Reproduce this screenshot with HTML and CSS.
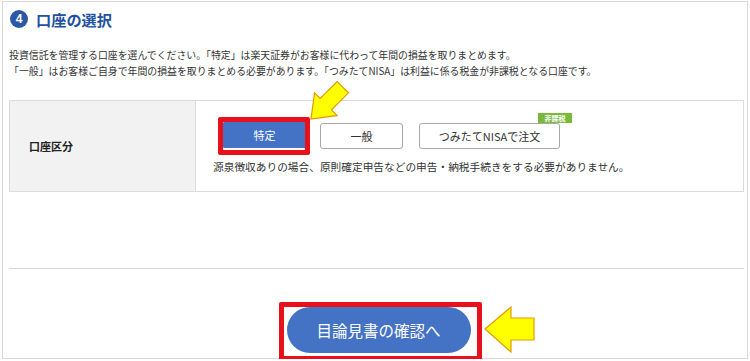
FILE: index.html
```html
<!DOCTYPE html>
<html lang="ja">
<head>
<meta charset="utf-8">
<link rel="stylesheet" href="styles.css">
</head>
<body>
<div class="frame">
  <div class="section">
    <h2 class="heading"><span class="num">4</span><span class="title">口座の選択</span></h2>
    <p class="desc">投資信託を管理する口座を選んでください。「特定」は楽天証券がお客様に代わって年間の損益を取りまとめます。<br>「一般」はお客様ご自身で年間の損益を取りまとめる必要があります。「つみたてNISA」は利益に係る税金が非課税となる口座です。</p>
    <div class="table">
      <div class="th">口座区分</div>
      <div class="td">
        <div class="btns">
          <div class="btn active">特定
            <svg class="arrow-diag" width="44" height="44" viewBox="0 0 44 44"><g transform="translate(2,42) rotate(-45)"><polygon points="0,0 21,-16 21,-8 45,-8 45,8 21,8 21,16" fill="#ffff00" stroke="#e39a0a" stroke-width="1.2" stroke-linejoin="miter"/></g></svg>
          </div>
          <div class="btn">一般</div>
          <div class="btn wide">つみたてNISAで注文<span class="badge">非課税</span></div>
        </div>
        <p class="note">源泉徴収ありの場合、原則確定申告などの申告・納税手続きをする必要がありません。</p>
      </div>
    </div>
  </div>
  <div class="footer">
    <div class="next">目論見書の確認へ
      <svg class="arrow-left" width="52" height="48" viewBox="0 0 52 48"><polygon points="1,23 27,1 27,12 50,12 50,34 27,34 27,46" fill="#ffff00" stroke="#e39a0a" stroke-width="1.2"/></svg>
    </div>
  </div>
</div>
</body>
</html>
```
FILE: styles.css
```css
html, body {
  margin: 0;
  padding: 0;
  background: #fff;
}
body {
  font-family: "Noto Sans CJK JP", "Noto Sans", sans-serif;
  color: #333;
}
.frame {
  box-sizing: border-box;
  width: 746px;
  height: 358px;
  margin: 1px 0 0 2px;
  border: 1px solid #dadada;
  overflow: visible;
}
.section {
  padding: 8px 3px 0 6px;
}
.heading {
  display: flex;
  align-items: center;
  gap: 8px;
  margin: 0;
  padding-left: 1px;
  height: 18px;
}
.num {
  width: 18px;
  height: 18px;
  border-radius: 50%;
  background: #2b58a4;
  color: #fff;
  font-family: "Liberation Sans", sans-serif;
  font-weight: bold;
  font-size: 12px;
  line-height: 18px;
  text-align: center;
}
.title {
  font-size: 15.2px;
  font-weight: bold;
  color: #22519f;
  line-height: 18px;
}
.desc {
  margin: 19px 0 0;
  font-size: 9.9px;
  line-height: 16px;
  color: #333;
  white-space: nowrap;
}
.table {
  display: flex;
  margin-top: 21px;
  height: 92px;
  box-sizing: border-box;
  border: 1px solid #dcdcdc;
}
.th {
  width: 186px;
  flex: none;
  box-sizing: border-box;
  background: #f2f2f2;
  border-right: 1px solid #dcdcdc;
  display: flex;
  align-items: center;
  padding-left: 19px;
  font-size: 11px;
  font-weight: bold;
  color: #222;
}
.td {
  flex: 1;
  padding: 22px 0 0 17px;
}
.btns {
  display: flex;
  align-items: flex-start;
  padding-left: 10px;
  gap: 14px;
}
.btn {
  position: relative;
  box-sizing: border-box;
  width: 83px;
  height: 26px;
  border: 1px solid #a8a8a8;
  border-radius: 3px;
  background: #fff;
  font-size: 11px;
  line-height: 24px;
  text-align: center;
  color: #333;
}
.btn.wide {
  width: 141px;
  margin-left: 2px;
}
.btn.active {
  background: #4472c4;
  border-color: #4472c4;
  color: #fff;
  border-radius: 1px;
  margin-top: -1px;
}
.btn.active::after {
  content: "";
  position: absolute;
  left: -6px;
  right: -5px;
  top: -6px;
  bottom: -8px;
  border: 5px solid #e8101a;
  border-radius: 2px;
}
.arrow-diag {
  position: absolute;
  left: 85px;
  top: -46px;
  overflow: visible;
}
.badge {
  position: absolute;
  right: -13px;
  top: -11px;
  width: 34px;
  height: 10px;
  background: #79b93a;
  color: #fff;
  font-size: 7px;
  font-weight: bold;
  line-height: 10px;
  text-align: center;
}
.note {
  margin: 10px 0 0;
  font-size: 10.7px;
  line-height: 16px;
  color: #333;
  white-space: nowrap;
}
.footer {
  margin: 76px 3px 0 6px;
  border-top: 1px solid #d6d6d6;
  padding-top: 38px;
  display: flex;
  justify-content: center;
}
.next {
  position: relative;
  width: 184px;
  height: 46px;
  border-radius: 23px;
  background: #4472c4;
  color: #fff;
  font-size: 15.5px;
  line-height: 46px;
  text-align: center;
  margin-left: 4px;
}
.next::before {
  content: "";
  position: absolute;
  left: -8px;
  right: -11px;
  top: -5px;
  bottom: -8px;
  border: 5px solid #e8101a;
  border-radius: 2px;
}
.arrow-left {
  position: absolute;
  left: calc(100% + 13px);
  top: -1px;
  overflow: visible;
}
```
